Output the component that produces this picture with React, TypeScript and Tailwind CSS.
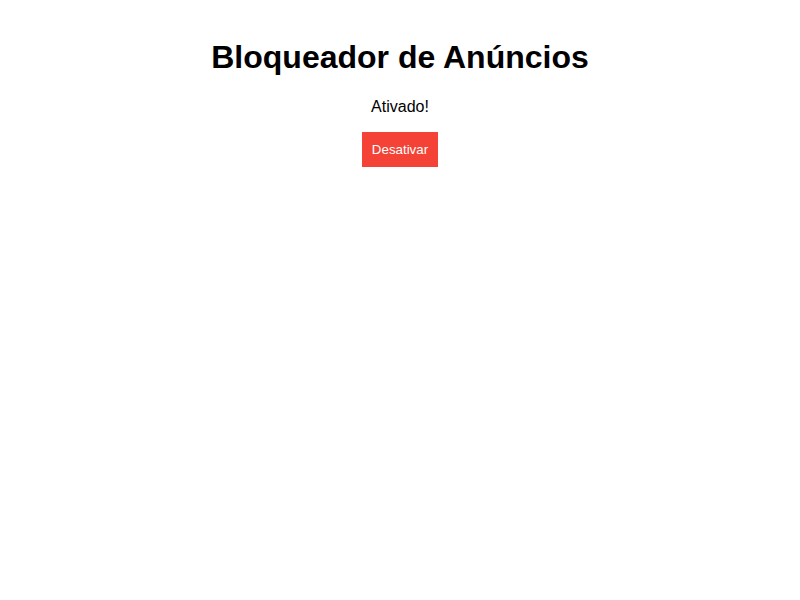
export default function App() {
  return (
    <div className="min-h-screen bg-white flex flex-col items-center pt-[39px] font-['Liberation_Sans',Arial,sans-serif] text-black">
      <h1 className="text-[32px] leading-[37px] font-bold">Bloqueador de Anúncios</h1>
      <p className="mt-[22px] text-[16px] leading-[18px]">Ativado!</p>
      <button className="mt-[16px] bg-[#f44336] text-white text-[13.33px] leading-[15px] px-[10px] py-[10px]">
        Desativar
      </button>
    </div>
  );
}
